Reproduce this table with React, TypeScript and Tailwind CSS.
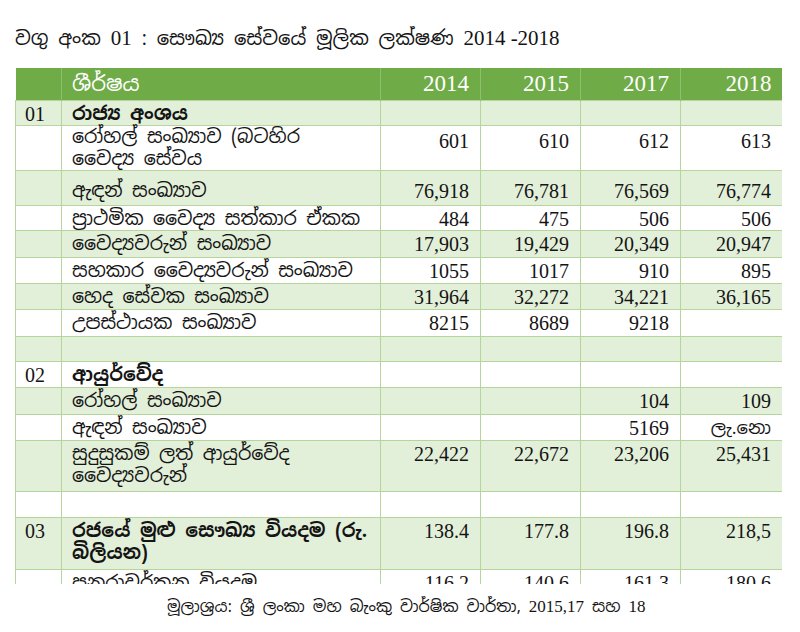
import React from "react";

type Row = {
  no?: string;
  label: string[];
  bold?: boolean;
  vals: string[];
  h: number;
  shade: boolean;
  pt?: number;
};

const rows: Row[] = [
  { no: "01", label: ["රාජ්‍ය අංශය"], bold: true, vals: ["", "", "", ""], h: 25, shade: true },
  { label: ["රෝහල් සංඛ්‍යාව (බටහිර", "වෛද්‍ය සේවය"], vals: ["601", "610", "612", "613"], h: 44, shade: false, pt: 0 },
  { label: ["ඇඳන් සංඛ්‍යාව"], vals: ["76,918", "76,781", "76,569", "76,774"], h: 35, shade: true, pt: 9 },
  { label: ["ප්‍රාථමික වෛද්‍ය සත්කාර ඒකක"], vals: ["484", "475", "506", "506"], h: 25, shade: false },
  { label: ["වෛද්‍යවරුන් සංඛ්‍යාව"], vals: ["17,903", "19,429", "20,349", "20,947"], h: 27, shade: true },
  { label: ["සහකාර වෛද්‍යවරුන් සංඛ්‍යාව"], vals: ["1055", "1017", "910", "895"], h: 26, shade: false },
  { label: ["හෙද සේවක සංඛ්‍යාව"], vals: ["31,964", "32,272", "34,221", "36,165"], h: 26, shade: true },
  { label: ["උපස්ථායක සංඛ්‍යාව"], vals: ["8215", "8689", "9218", ""], h: 27, shade: false },
  { label: [""], vals: ["", "", "", ""], h: 25, shade: true },
  { no: "02", label: ["ආයුර්වේද"], bold: true, vals: ["", "", "", ""], h: 26, shade: false },
  { label: ["රෝහල් සංඛ්‍යාව"], vals: ["", "", "104", "109"], h: 27, shade: true },
  { label: ["ඇඳන් සංඛ්‍යාව"], vals: ["", "", "5169", "ලැ.නො"], h: 26, shade: false },
  { label: ["සුදුසුකම් ලත් ආයුර්වේද", "වෛද්‍යවරුන්"], vals: ["22,422", "22,672", "23,206", "25,431"], h: 51, shade: true },
  { label: [""], vals: ["", "", "", ""], h: 26, shade: false },
  { no: "03", label: ["රජයේ මුළු සෞඛ්‍ය වියදම (රු.", "බිලියන)"], bold: true, vals: ["138.4", "177.8", "196.8", "218,5"], h: 52, shade: true },
  { label: ["පුනරාවර්තන වියදම"], vals: ["116.2", "140.6", "161.3", "180.6"], h: 30, shade: false },
];

const sin = "font-['Noto_Sans_Sinhala','Iskoola_Pota','Noto_Sans',sans-serif]";
const ser = "font-['Liberation_Serif',serif]";

export default function App() {
  return (
    <div className="w-[800px] h-[632px] bg-white text-[#141414] overflow-hidden">
      <div className={`pl-[15px] pt-[24px] h-[52px] text-[19.5px] leading-[28px] ${sin}`}>
        වගු අංක <span className={`${ser} text-[21px]`}>01</span> : සෞඛ්‍ය සේවයේ මූලික ලක්ෂණ{" "}
        <span className={`${ser} text-[21px]`}>2014 -2018</span>
      </div>
      <div className="mt-[16px] ml-[15px] w-[767px] h-[516px] overflow-hidden">
        <table className="w-[767px] table-fixed border-collapse">
          <colgroup>
            <col className="w-[46px]" />
            <col className="w-[319px]" />
            <col className="w-[100px]" />
            <col className="w-[100px]" />
            <col className="w-[100px]" />
            <col className="w-[102px]" />
          </colgroup>
          <thead>
            <tr className="h-[31px] bg-[#6fab47] text-white">
              <th className="border-r border-[#8dbf6c]" />
              <th className={`text-left align-middle pl-[10px] font-normal text-[21px] ${sin} border-r border-[#8dbf6c]`}>
                ශීර්ෂය
              </th>
              {["2014", "2015", "2017", "2018"].map((y, i) => (
                <th
                  key={y}
                  className={`text-right align-middle pr-[11px] font-normal text-[23px] leading-[31px] ${ser} ${
                    i < 3 ? "border-r border-[#8dbf6c]" : ""
                  }`}
                >
                  {y}
                </th>
              ))}
            </tr>
          </thead>
          <tbody>
            {rows.map((r, idx) => {
              const pad = { paddingTop: r.pt ?? 2 };
              const numPad = { paddingTop: r.pt === 0 ? 4 : r.pt ?? 2 };
              return (
                <tr
                  key={idx}
                  style={{ height: r.h }}
                  className={r.shade ? "bg-[#e2efd9]" : "bg-white"}
                >
                  <td
                    style={numPad}
                    className={`align-top border border-[#b5d59c] pl-[9px] text-[20px] leading-[22px] ${ser}`}
                  >
                    {r.no}
                  </td>
                  <td
                    style={pad}
                    className={`align-top border border-[#b5d59c] pl-[10px] text-[19px] leading-[22px] ${sin} ${
                      r.bold ? "font-bold" : ""
                    }`}
                  >
                    {r.label.map((l, i) => (
                      <div key={i}>{l}</div>
                    ))}
                  </td>
                  {r.vals.map((v, i) => (
                    <td
                      key={i}
                      style={numPad}
                      className={`align-top border border-[#b5d59c] text-right pr-[11px] leading-[22px] ${
                        v === "ලැ.නො" ? sin + " text-[18px]" : ser + " text-[20px]"
                      }`}
                    >
                      {v}
                    </td>
                  ))}
                </tr>
              );
            })}
          </tbody>
        </table>
      </div>
      <div className={`mt-[12px] pl-[167px] text-[16px] leading-[22px] ${sin}`}>
        මූලාශ්‍රය: ශ්‍රී ලංකා මහ බැංකු වාර්ෂික වාර්තා, <span className={`${ser} text-[17px]`}>2015,17</span> සහ{" "}
        <span className={`${ser} text-[17px]`}>18</span>
      </div>
    </div>
  );
}
